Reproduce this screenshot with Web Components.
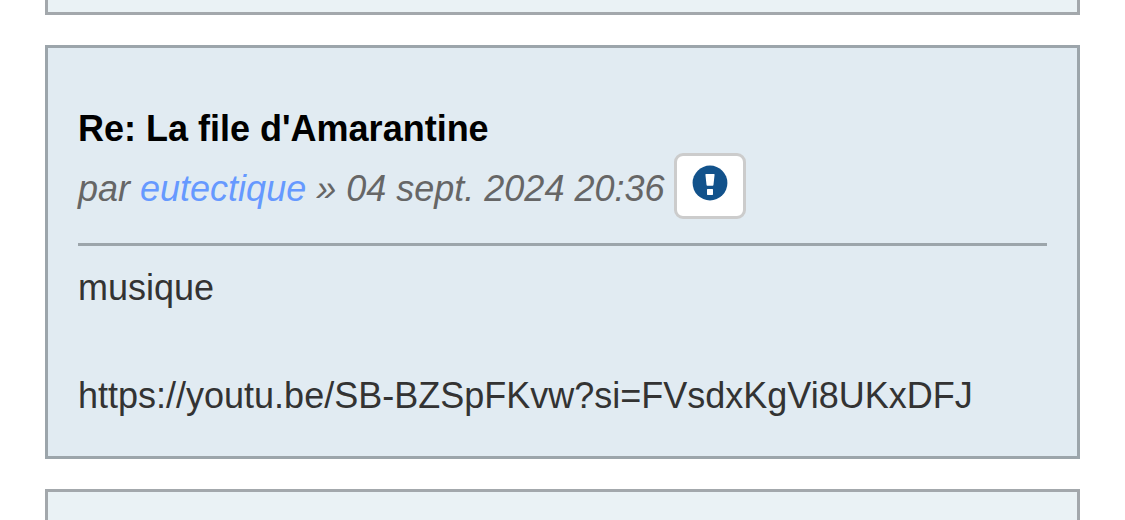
<!DOCTYPE html>
<html lang="fr">
<head>
<meta charset="utf-8">
<meta name="viewport" content="width=device-width, initial-scale=1">
<title>La file d'Amarantine</title>
<style>
body { margin: 0; background: #fff; color: #333; font: 36px/54px "Liberation Sans", Arial, sans-serif; }
</style>
</head>
<body>
<topic-list>
  <post-panel tone="light" part-of="previous"></post-panel>
  <forum-post author="eutectique" date="04 sept. 2024 20:36">
    <span slot="title">Re: La file d'Amarantine</span>
    <div>musique</div>
    <br>
    <div>https://youtu.be/SB-BZSpFKvw?si=FVsdxKgVi8UKxDFJ</div>
  </forum-post>
  <post-panel tone="light"></post-panel>
</topic-list>

<template id="topic-list">
  <style>
    :host { display: flex; flex-direction: column; gap: 30px; padding: 0 45px; height: 100vh; overflow: hidden; box-sizing: border-box; }
    ::slotted(*) { flex: none; }
  </style>
  <slot></slot>
</template>

<template id="post-panel">
  <style>
    :host { display: block; box-sizing: border-box; border: 3px solid #9ca5ab; background: #e1ebf2; padding: 60px 30px 33px; }
    :host([tone="light"]) { background: #eaf2f5; border-color: #a3a8ac; padding: 30px; }
    :host([part-of="previous"]) { border-top: 0; padding: 6px; }
  </style>
  <slot></slot>
</template>

<template id="forum-post">
  <style>
    :host { display: block; }
    h3 { margin: 0; font-size: 36px; line-height: 42px; color: #000; }
    .author { display: flex; align-items: center; flex-wrap: wrap; gap: 9px; margin: 3px 0 24px; color: #666; font-style: italic; }
    .author p { margin: 0; padding-top: 6px; }
    a { color: #69f; text-decoration: none; }
    .content { border-top: 3px solid #9ca5ab; padding-top: 15px; overflow-wrap: anywhere; }
  </style>
  <post-panel>
    <article>
      <h3><slot name="title"></slot></h3>
      <div class="author">
        <p>par <a href="#"></a> » <time></time></p>
        <report-button></report-button>
      </div>
      <div class="content"><slot></slot></div>
    </article>
  </post-panel>
</template>

<template id="report-button">
  <style>
    :host { display: block; }
    button { display: block; box-sizing: border-box; width: 72px; height: 66px; padding: 0 0 6px; border: 3px solid #ccc; border-radius: 9px; background: #fff; cursor: pointer; }
    svg { display: block; margin: auto; width: 36px; height: 36px; }
  </style>
  <button type="button" aria-label="Signaler le message">
    <svg viewBox="0 0 36 36" aria-hidden="true">
      <circle cx="18" cy="18" r="17.4" fill="#12528b"/>
      <path fill="#fff" d="M14 8.9h8q.6 0 .6.6l-1.1 10.3q-.1.9-.8.9h-5.4q-.7 0-.8-.9l-1.1-10.3q0-.6.6-.6zM15.6 23.9h4.8q.6 0 .6.6v4.8q0 .6-.6.6h-4.8q-.6 0-.6-.6v-4.8q0-.6.6-.6z"/>
    </svg>
  </button>
</template>

<script>
class TemplateElement extends HTMLElement {
  constructor() {
    super();
    this.attachShadow({ mode: "open" })
      .append(document.getElementById(this.localName).content.cloneNode(true));
  }
}
class ForumPost extends TemplateElement {
  connectedCallback() {
    this.shadowRoot.querySelector("a").textContent = this.getAttribute("author");
    this.shadowRoot.querySelector("time").textContent = this.getAttribute("date");
  }
}
customElements.define("topic-list", class extends TemplateElement {});
customElements.define("post-panel", class extends TemplateElement {});
customElements.define("report-button", class extends TemplateElement {});
customElements.define("forum-post", ForumPost);
</script>
</body>
</html>
